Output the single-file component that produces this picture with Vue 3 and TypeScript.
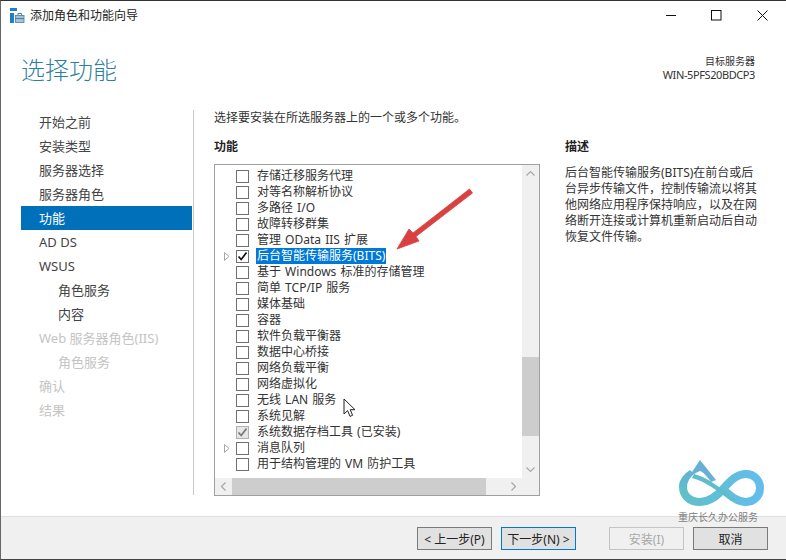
<script setup lang="ts">
interface Row { label: string; expand?: boolean; state?: 'checked' | 'installed'; selected?: boolean }
interface NavItem { label: string; sub?: boolean; off?: boolean; active?: boolean }

const nav: NavItem[] = [
  { label: '开始之前' }, { label: '安装类型' }, { label: '服务器选择' }, { label: '服务器角色' },
  { label: '功能', active: true }, { label: 'AD DS' }, { label: 'WSUS' },
  { label: '角色服务', sub: true }, { label: '内容', sub: true },
  { label: 'Web 服务器角色(IIS)', off: true }, { label: '角色服务', sub: true, off: true },
  { label: '确认', off: true }, { label: '结果', off: true }
]
const rows: Row[] = [
  { label: '存储迁移服务代理' }, { label: '对等名称解析协议' }, { label: '多路径 I/O' }, { label: '故障转移群集' },
  { label: '管理 OData IIS 扩展' },
  { label: '后台智能传输服务(BITS)', expand: true, state: 'checked', selected: true },
  { label: '基于 Windows 标准的存储管理' }, { label: '简单 TCP/IP 服务' }, { label: '媒体基础' }, { label: '容器' },
  { label: '软件负载平衡器' }, { label: '数据中心桥接' }, { label: '网络负载平衡' }, { label: '网络虚拟化' },
  { label: '无线 LAN 服务' }, { label: '系统见解' },
  { label: '系统数据存档工具 (已安装)', state: 'installed' },
  { label: '消息队列', expand: true }, { label: '用于结构管理的 VM 防护工具' }
]
const descLines = [
  '后台智能传输服务(BITS)在前台或后', '台异步传输文件，控制传输流以将其',
  '他网络应用程序保持响应，以及在网', '络断开连接或计算机重新启动后自动', '恢复文件传输。'
]
</script>

<template>
  <div class="win">
    <header class="titlebar">
      <svg class="appicon" width="15" height="15" viewBox="0 0 15 15">
        <rect x="0" y="0" width="7" height="3" fill="#1f7fc4" />
        <rect x="0" y="5" width="4" height="10" fill="#1f7fc4" />
        <rect x="5.5" y="7.5" width="8.5" height="7" fill="#9fc4dc" stroke="#4d7f9e" stroke-width="0.8" />
        <path d="M8 7.5V5.5h3.5v2" fill="none" stroke="#4d7f9e" />
        <rect x="5" y="10" width="9" height="1" fill="#4d7f9e" />
      </svg>
      <span class="title">添加角色和功能向导</span>
      <div class="caps">
        <svg width="11" height="11" viewBox="0 0 11 11"><path d="M1 5.5h10" stroke="#111" fill="none" /></svg>
        <svg width="11" height="11" viewBox="0 0 11 11"><rect x="0.5" y="0.5" width="9.5" height="9.5" stroke="#111" fill="none" /></svg>
        <svg width="11" height="11" viewBox="0 0 11 11"><path d="M0.5 0.5l10 10M10.5 0.5l-10 10" stroke="#111" fill="none" /></svg>
      </div>
    </header>

    <div class="head">
      <h1>选择功能</h1>
      <div class="server">
        <div class="s1">目标服务器</div>
        <div class="s2">WIN-5PFS20BDCP3</div>
      </div>
    </div>

    <div class="body">
      <nav class="nav">
        <div
          v-for="(n, i) in nav"
          :key="i"
          class="nav-item"
          :class="{ sub: n.sub, off: n.off, active: n.active }"
        >{{ n.label }}</div>
      </nav>

      <main class="content">
        <p class="lead">选择要安装在所选服务器上的一个或多个功能。</p>
        <div class="cols">
          <section class="left">
            <h2>功能</h2>
            <div class="tree">
              <div class="tree-main">
                <div class="rows">
                  <div v-for="(r, i) in rows" :key="i" class="row">
                    <span class="exp">
                      <svg v-if="r.expand" width="6" height="9" viewBox="0 0 6 9"><path d="M0.5 0.5L5 4.5L0.5 8.5Z" fill="#fff" stroke="#a6a6a6" /></svg>
                    </span>
                    <span class="box" :class="{ inst: r.state === 'installed' }">
                      <svg v-if="r.state" width="11" height="11" viewBox="0 0 11 11">
                        <path d="M1.5 5.5L4.2 8.5L9.5 1.5" fill="none" :stroke="r.state === 'checked' ? '#111' : '#777'" stroke-width="1.7" />
                      </svg>
                    </span>
                    <span class="lbl" :class="{ sel: r.selected }">{{ r.label }}</span>
                  </div>
                </div>
                <div class="vbar">
                  <svg width="17" height="17" viewBox="0 0 17 17"><path d="M4.5 10.5l4-4 4 4" fill="none" stroke="#a8a8a8" stroke-width="1.2" /></svg>
                  <div class="vtrack"><div class="vthumb"></div></div>
                  <svg width="17" height="17" viewBox="0 0 17 17"><path d="M4.5 6.5l4 4 4-4" fill="none" stroke="#a8a8a8" stroke-width="1.2" /></svg>
                </div>
              </div>
              <div class="hbar">
                <svg width="17" height="17" viewBox="0 0 17 17"><path d="M10.5 4.5l-4 4 4 4" fill="none" stroke="#a8a8a8" stroke-width="1.2" /></svg>
                <div class="hthumb"></div>
                <svg class="hright" width="17" height="17" viewBox="0 0 17 17"><path d="M6.5 4.5l4 4-4 4" fill="none" stroke="#a8a8a8" stroke-width="1.2" /></svg>
                <div class="corner"></div>
              </div>
            </div>
          </section>
          <aside class="desc">
            <h2>描述</h2>
            <div class="desc-text">
              <div v-for="(l, i) in descLines" :key="i">{{ l }}</div>
            </div>
          </aside>
        </div>
      </main>
    </div>

    <footer class="foot">
      <button class="btn">&lt; 上一步(P)</button>
      <button class="btn next">下一步(N) &gt;</button>
      <button class="btn dis install">安装(I)</button>
      <button class="btn">取消</button>
    </footer>

    <svg class="arrow" width="84" height="68" viewBox="0 0 84 68">
      <path d="M79.5 1L82.5 5L26 48.5L29 53L7 61L19 41L23 45Z" fill="#d94040" stroke="#d94040" stroke-width="0.8" stroke-linejoin="round" />
    </svg>

    <svg class="cursor" width="14" height="20" viewBox="0 0 14 20">
      <path d="M1 1V16L4.6 12.6L7 18.4L9.6 17.3L7.2 11.7H12Z" fill="#fff" stroke="#222" stroke-width="1" />
    </svg>

    <div class="mark">
      <svg width="88" height="50" viewBox="0 0 88 50">
        <defs>
          <linearGradient id="inf" x1="0" y1="0" x2="1" y2="0">
            <stop offset="0" stop-color="#5fc0c8" />
            <stop offset="1" stop-color="#62bdec" />
          </linearGradient>
          <linearGradient id="peak" x1="0" y1="1" x2="1" y2="0">
            <stop offset="0" stop-color="#5fbccb" />
            <stop offset="1" stop-color="#6fa8dc" />
          </linearGradient>
        </defs>
        <path d="M5 28C5 36 11 43 22 43C32 43 39 37 46 29C53 21 59 15 68 15C76 15 82 21 82 29C82 37 76 43 68 43C60 43 54 38 47 32" fill="none" stroke="url(#inf)" stroke-width="8" />
        <path d="M1 28C1 22 4 18 8 14L12 11L14 13L22 1L38 21L33 23C29 17 25 13 22 12C16 14 9 20 9 28Z" fill="url(#peak)" />
        <path d="M16 15C29 18 41 28 58 41L53 42C41 33 29 23 14 19Z" fill="#5fbccb" />
      </svg>
      <div class="mark-text">重庆长久办公服务</div>
    </div>
  </div>
</template>

<style>
html, body { margin: 0; background: #fff; }
</style>

<style scoped>
.win {
  position: relative;
  width: 786px;
  height: 560px;
  box-sizing: border-box;
  border-top: 1px solid #333;
  border-left: 1px solid #666;
  border-bottom: 1px solid #444;
  background: #fff;
  display: flex;
  flex-direction: column;
  overflow: hidden;
  color: #222;
  font-family: "Noto Sans", "Noto Sans CJK SC", sans-serif;
  font-size: 12px;
}
.titlebar {
  height: 30px;
  box-sizing: border-box;
  padding: 0 0 2px 9px;
  display: flex;
  align-items: center;
  flex: none;
}
.appicon { margin-right: 5px; }
.title { font-size: 12px; color: #222; }
.caps {
  margin-left: auto;
  display: flex;
  gap: 35px;
  padding-right: 18px;
  margin-top: 1px;
}
.head {
  height: 79px;
  flex: none;
  display: flex;
  justify-content: space-between;
  padding: 0 31px 0 20px;
  box-sizing: border-box;
}
h1 {
  margin: 21px 0 0;
  font-size: 24px;
  line-height: 36px;
  font-weight: 300;
  color: #2f7f9f;
}
.server { text-align: right; margin-top: 24px; color: #333; }
.s1 { font-size: 10px; line-height: 13px; }
.s2 { font-size: 11px; line-height: 14px; letter-spacing: -0.4px; }
.body {
  flex: 1;
  display: flex;
  min-height: 0;
  padding-left: 20px;
}
.nav {
  width: 171px;
  flex: none;
}
.nav-item {
  height: 24px;
  line-height: 24px;
  font-size: 13px;
  padding-left: 18px;
  color: #444;
  white-space: nowrap;
}
.nav-item.sub { padding-left: 37px; }
.nav-item.off { color: #c4c4c4; }
.nav-item.active { background: #0070ba; color: #fff; }
.content {
  flex: 1;
  margin-left: 1px;
  border-left: 1px solid #c8c8c8;
  padding: 0 0 0 20px;
  height: 385px;
  display: flex;
  flex-direction: column;
}
.lead { margin: 0; line-height: 16px; color: #333; }
.cols { display: flex; margin-top: 13px; }
.left { width: 326px; flex: none; }
h2 { margin: 0; font-size: 12px; font-weight: 700; line-height: 16px; color: #222; }
.tree {
  margin-top: 9px;
  width: 326px;
  height: 332px;
  box-sizing: border-box;
  border: 1px solid #a0a0a0;
  display: flex;
  flex-direction: column;
}
.tree-main { flex: 1; display: flex; min-height: 0; }
.rows { flex: 1; overflow: hidden; padding-top: 3px; }
.row { height: 16px; display: flex; align-items: center; white-space: nowrap; }
.exp { width: 21px; flex: none; padding-left: 9px; box-sizing: border-box; display: flex; align-items: center; }
.box {
  width: 13px;
  height: 13px;
  box-sizing: border-box;
  border: 1px solid #707070;
  background: #fff;
  flex: none;
  display: flex;
  align-items: center;
  justify-content: center;
}
.box.inst { background: #e6e6e6; border-color: #b0b0b0; }
.lbl { margin-left: 7px; padding: 0 1px; line-height: 16px; color: #333; word-spacing: 1px; }
.lbl.sel { background: #0078d7; color: #fff; }
.vbar { width: 17px; flex: none; background: #f0f0f0; display: flex; flex-direction: column; }
.vtrack { flex: 1; }
.vthumb { margin-top: 175px; height: 79px; background: #cdcdcd; }
.hbar { height: 17px; flex: none; background: #f0f0f0; display: flex; }
.hthumb { width: 254px; background: #cdcdcd; }
.hright { margin-left: auto; }
.corner { width: 17px; background: #f0f0f0; }
.desc { margin-left: 25px; width: 200px; }
.desc-text { margin-top: 10px; line-height: 16px; color: #333; white-space: nowrap; }
.foot {
  height: 43px;
  flex: none;
  box-sizing: border-box;
  border-top: 1px solid #dfdfdf;
  background: #f0f0f0;
  display: flex;
  align-items: flex-start;
  padding: 10px 0 0 416px;
  gap: 9px;
}
.btn {
  width: 75px;
  height: 23px;
  box-sizing: border-box;
  padding: 0;
  border: 1px solid #7a7a7a;
  background: #e1e1e1;
  color: #222;
  font: inherit;
}
.btn.next { border-color: #0078d7; }
.btn.dis { color: #a8a8a8; border-color: #c4c4c4; background: #f0f0f0; }
.btn.install { margin-left: 24px; }
.arrow { position: absolute; left: 389px; top: 187px; }
.cursor { position: absolute; left: 342px; top: 397px; }
.mark { position: absolute; left: 677px; top: 458px; width: 88px; pointer-events: none; }
.mark svg { display: block; }
.mark-text { margin-top: 1px; font-size: 10px; line-height: 14px; color: #808080; white-space: nowrap; }
</style>
